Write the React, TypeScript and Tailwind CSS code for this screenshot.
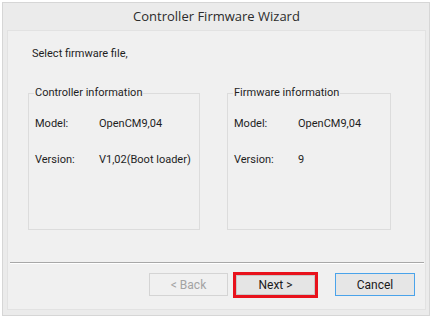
import React from "react";

const body = { fontFamily: 'Roboto, "Liberation Sans", Arial, sans-serif' } as const;

function Group({ title, model, version }: { title: string; model: string; version: string }) {
  return (
    <div className="relative h-[137px] border border-[#dcdcdc]">
      <span className="absolute left-[5px] top-[-9px] whitespace-nowrap bg-[#f0f0f0] px-[1px] text-[11px] leading-[16px] text-[#1e1e1e]">
        {title}
      </span>
      <div className="flex flex-col whitespace-nowrap pl-[6px] pt-[22px] text-[11px] leading-[16px] text-[#1e1e1e]">
        <div className="flex">
          <span className="w-[64px] shrink-0">Model:</span>
          <span>{model}</span>
        </div>
        <div className="mt-[20px] flex">
          <span className="w-[64px] shrink-0">Version:</span>
          <span>{version}</span>
        </div>
      </div>
    </div>
  );
}

export default function App() {
  return (
    <div className="h-[319px] w-[432px] bg-white pl-[2px] pt-[2px]" style={body}>
      <div className="flex h-[314px] w-[428px] flex-col border border-[#d6d6d6] bg-[#ebebeb] pl-[4px] pr-[3px]">
        <div
          className="flex h-[27px] items-center justify-center text-[13px] text-[#2b2b2b]"
          style={{ fontFamily: '"Open Sans", "Noto Sans", sans-serif' }}
        >
          Controller Firmware Wizard
        </div>
        <div className="mb-[5px] flex flex-1 flex-col border border-[#e2e2e2] bg-[#f0f0f0]">
          <div className="pl-[24px] pt-[15px] text-[11px] leading-[16px] text-[#1e1e1e]">Select firmware file,</div>
          <div className="ml-[20px] mt-[31px] flex gap-[27px]">
            <div className="w-[172px]">
              <Group title="Controller information" model="OpenCM9,04" version="V1,02(Boot loader)" />
            </div>
            <div className="w-[164px]">
              <Group title="Firmware information" model="OpenCM9,04" version="9" />
            </div>
          </div>
          <div className="ml-[2px] mr-[1px] mt-[32px] h-[2px] border-t border-[#a8a8a8] border-b border-b-white" />
          <div className="mt-[9px] flex h-[23px] items-center justify-end pr-[10px] text-[12px]">
            <div className="flex h-[23px] w-[79px] items-center justify-center border border-[#d4d4d4] bg-[#f0f0f0] text-[#a3a3a3]">
              &lt; Back
            </div>
            <div className="ml-[5px] flex h-[26px] w-[85px] border-[3px] border-[#e8121c] bg-[#e5e5e5]">
              <div className="flex flex-1 items-center justify-center border border-[#c8c8c8] text-[#1a1a1a]">Next &gt;</div>
            </div>
            <div className="ml-[17px] flex h-[23px] w-[80px] items-center justify-center border border-[#4aa3ea] bg-[#e6e6e6] text-[#1a1a1a]">
              Cancel
            </div>
          </div>
          <div className="flex-1" />
        </div>
      </div>
    </div>
  );
}
